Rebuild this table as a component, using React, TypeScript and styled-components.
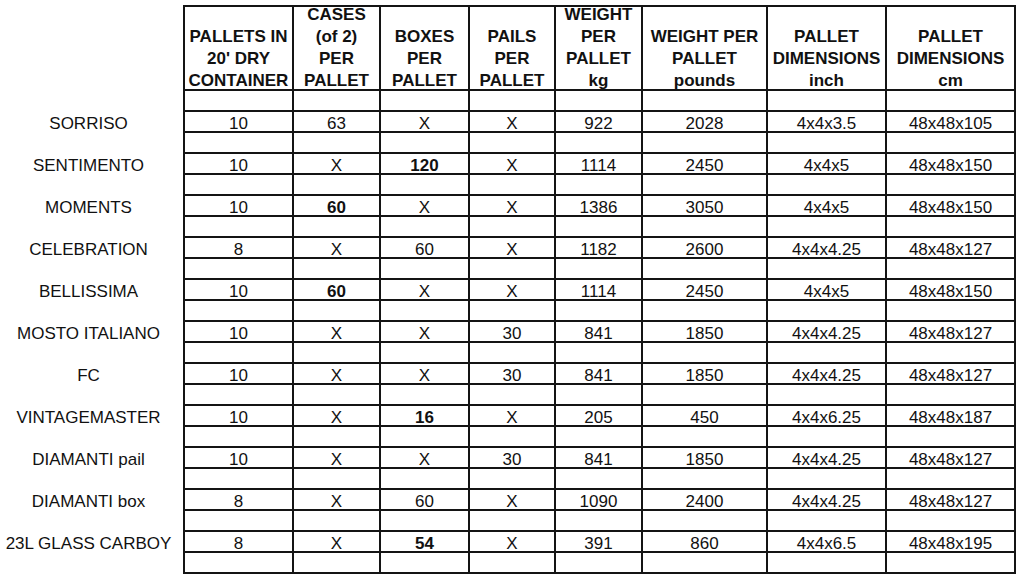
import { createGlobalStyle, styled } from 'styled-components';

const GlobalStyle = createGlobalStyle`
	html, body {
		margin: 0;
		padding: 0;
		background: #ffffff;
	}
	body {
		font-family: 'Liberation Sans', Arial, sans-serif;
		color: #111111;
	}
`;

type Cell = string | { bold: string };

type Product = {
	name: string;
	values: Cell[];
};

const headers: string[][] = [
	["PALLETS IN", "20' DRY", 'CONTAINER'],
	['CASES', '(of 2)', 'PER', 'PALLET'],
	['BOXES', 'PER', 'PALLET'],
	['PAILS', 'PER', 'PALLET'],
	['WEIGHT', 'PER', 'PALLET', 'kg'],
	['WEIGHT PER', 'PALLET', 'pounds'],
	['PALLET', 'DIMENSIONS', 'inch'],
	['PALLET', 'DIMENSIONS', 'cm']
];

// label column first, then one width per bordered column
const columnWidths: number[] = [184, 109, 87, 89, 86, 87, 125, 119, 129];

const products: Product[] = [
	{ name: 'SORRISO', values: ['10', '63', 'X', 'X', '922', '2028', '4x4x3.5', '48x48x105'] },
	{ name: 'SENTIMENTO', values: ['10', 'X', { bold: '120' }, 'X', '1114', '2450', '4x4x5', '48x48x150'] },
	{ name: 'MOMENTS', values: ['10', { bold: '60' }, 'X', 'X', '1386', '3050', '4x4x5', '48x48x150'] },
	{ name: 'CELEBRATION', values: ['8', 'X', '60', 'X', '1182', '2600', '4x4x4.25', '48x48x127'] },
	{ name: 'BELLISSIMA', values: ['10', { bold: '60' }, 'X', 'X', '1114', '2450', '4x4x5', '48x48x150'] },
	{ name: 'MOSTO ITALIANO', values: ['10', 'X', 'X', '30', '841', '1850', '4x4x4.25', '48x48x127'] },
	{ name: 'FC', values: ['10', 'X', 'X', '30', '841', '1850', '4x4x4.25', '48x48x127'] },
	{ name: 'VINTAGEMASTER', values: ['10', 'X', { bold: '16' }, 'X', '205', '450', '4x4x6.25', '48x48x187'] },
	{ name: 'DIAMANTI pail', values: ['10', 'X', 'X', '30', '841', '1850', '4x4x4.25', '48x48x127'] },
	{ name: 'DIAMANTI box', values: ['8', 'X', '60', 'X', '1090', '2400', '4x4x4.25', '48x48x127'] },
	{ name: '23L GLASS CARBOY', values: ['8', 'X', { bold: '54' }, 'X', '391', '860', '4x4x6.5', '48x48x195'] }
];

const Sheet = styled.table`
	border-collapse: collapse;
	table-layout: fixed;
	width: 1015px;
	margin-top: 5px;
	font-size: 17px;
`;

const Column = styled.col<{ $width: number }>`
	width: ${({ $width }) => $width}px;
`;

const HeadRow = styled.tr`
	height: 84px;
`;

const Row = styled.tr`
	height: 21px;
`;

const LabelCell = styled.td`
	padding: 4px 6px 0 0;
	border: none;
	text-align: center;
	white-space: nowrap;
	line-height: 15px;
`;

const HeadCell = styled.th`
	padding: 0;
	border: 2px solid #141414;
	vertical-align: bottom;
	font-weight: bold;
	text-align: center;
`;

const HeadText = styled.div`
	display: flex;
	flex-direction: column;
	justify-content: flex-end;
	height: 82px;
	margin-bottom: -3px;
	line-height: 22px;
	white-space: nowrap;
`;

const ValueCell = styled.td<{ $bold?: boolean }>`
	padding: 4px 0 0;
	border: 2px solid #141414;
	text-align: center;
	line-height: 15px;
	font-weight: ${({ $bold }) => ($bold ? 'bold' : 'normal')};
	white-space: nowrap;
`;

function ProductRows({ product }: { product: Product }) {
	return (
		<>
			<Row>
				<LabelCell />
				{product.values.map((_, i) => (
					<ValueCell key={i} />
				))}
			</Row>
			<Row>
				<LabelCell>{product.name}</LabelCell>
				{product.values.map((value, i) =>
					typeof value === 'string' ? (
						<ValueCell key={i}>{value}</ValueCell>
					) : (
						<ValueCell key={i} $bold>
							{value.bold}
						</ValueCell>
					)
				)}
			</Row>
		</>
	);
}

export default function App() {
	return (
		<>
			<GlobalStyle />
			<Sheet>
				<colgroup>
					{columnWidths.map((w, i) => (
						<Column key={i} $width={w} />
					))}
				</colgroup>
				<thead>
					<HeadRow>
						<LabelCell />
						{headers.map((lines, i) => (
							<HeadCell key={i}>
								<HeadText>
									{lines.map((line) => (
										<span key={line}>{line}</span>
									))}
								</HeadText>
							</HeadCell>
						))}
					</HeadRow>
				</thead>
				<tbody>
					{products.map((product) => (
						<ProductRows key={product.name} product={product} />
					))}
					<Row>
						<LabelCell />
						{headers.map((_, i) => (
							<ValueCell key={i} />
						))}
					</Row>
				</tbody>
			</Sheet>
		</>
	);
}
